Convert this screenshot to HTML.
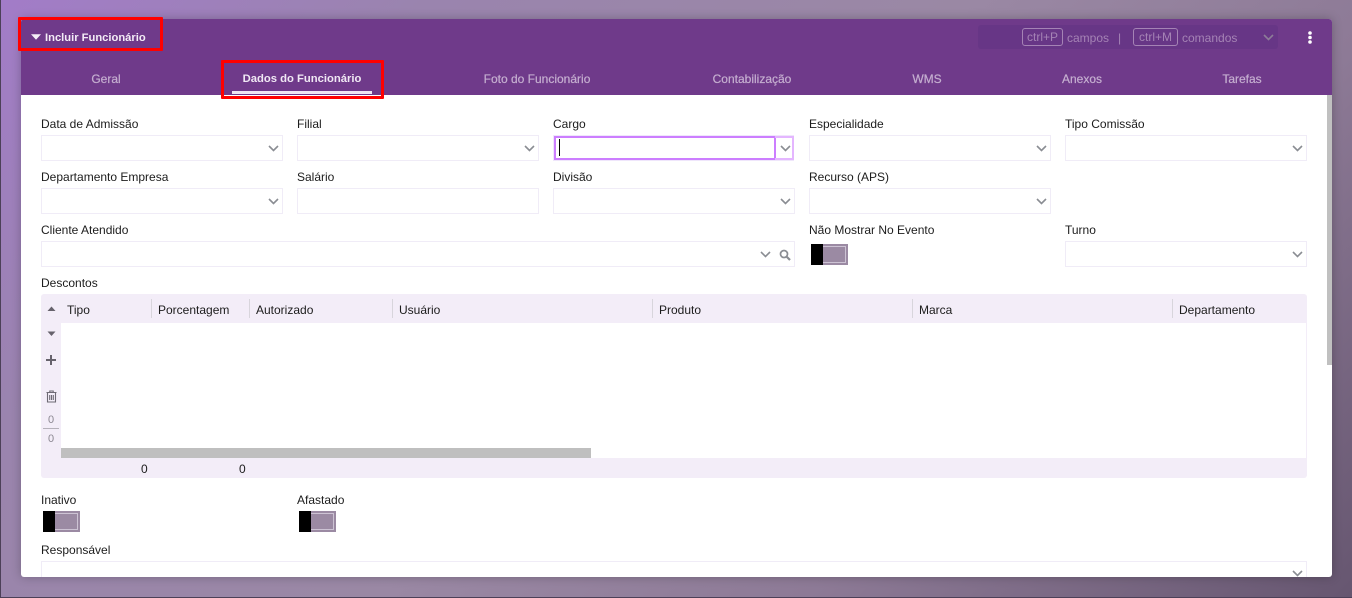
<!DOCTYPE html>
<html lang="pt-BR">
<head>
<meta charset="utf-8">
<title>Incluir Funcionário</title>
<style>
html,body{margin:0;padding:0;width:1352px;height:598px;overflow:hidden}
body{position:relative;font-family:"Liberation Sans",sans-serif;font-size:12px;color:#1c1c1c;
background:linear-gradient(135deg,#a27cc8 0%,#9a84ae 22%,#9a88a4 50%,#8d7a96 72%,#665670 100%)}
.a{position:absolute}
#edgeL{left:0;top:0;width:1px;height:598px;background:#4c4058}
#edgeB{left:0;top:597px;width:1352px;height:1px;background:#4c4058}
#panel{left:21px;top:19px;width:1311px;height:558px;background:#fff;border-radius:3px;box-shadow:0 0 10px rgba(0,0,0,.25);overflow:hidden}
#head{left:21px;top:19px;width:1311px;height:76px;background:#6f3a8a;border-radius:3px 3px 0 0}
.t{position:absolute;white-space:nowrap;line-height:16px}
.tab{color:#c5aed0;font-weight:400;top:71px;transform:translateX(-50%);-webkit-text-stroke:.2px #c5aed0}
.box{position:absolute;height:24px;width:240px;border:1px solid #f0ecf7;background:#fff}
.chev{position:absolute;width:11px;height:7px}
.sw{position:absolute;width:37px;height:21px;background:#9b8aa3}
.sw:before{content:"";position:absolute;left:12px;top:2px;width:22px;height:15px;border:1px solid #cdc3d4;border-left:0}
.sw:after{content:"";position:absolute;left:0;top:0;width:12px;height:21px;background:#000}
.sep{position:absolute;top:299px;width:1px;height:19px;background:#d8d5dc}
.red{position:absolute;border:3px solid #f00;box-sizing:border-box;border-radius:1px}
.kbd{position:absolute;top:28px;height:18px;border:1px solid #a583b5;border-radius:3px;color:#a583b5;font-size:12px;line-height:17px;text-align:center;box-sizing:border-box}
.dim{color:#a583b5;font-size:12px}
</style>
</head>
<body>
<div class="a" id="edgeL"></div>
<div class="a" id="edgeB"></div>
<div class="a" id="panel"></div>
<div class="a" id="head"></div>

<!-- header -->
<svg class="a" style="left:31px;top:34px" width="10" height="6"><path d="M0 0.3H10L5 5.7Z" fill="#f5eef8"/></svg>
<div class="t" style="left:45px;top:30px;color:#f3ecf6;font-weight:700;font-size:11.2px">Incluir Funcionário</div>

<div class="a" style="left:978px;top:25px;width:300px;height:24px;background:#673686;border-radius:3px"></div>
<div class="kbd" style="left:1022px;width:41px">ctrl+P</div>
<div class="t dim" style="left:1067px;top:30px">campos</div>
<div class="t dim" style="left:1118px;top:30px">|</div>
<div class="kbd" style="left:1133px;width:45px">ctrl+M</div>
<div class="t dim" style="left:1182px;top:30px">comandos</div>
<svg class="chev" style="left:1263px;top:34px"><path d="M1 1L5.5 5.5L10 1" fill="none" stroke="#8d7d98" stroke-width="1.6"/></svg>
<svg class="a" style="left:1307px;top:31px" width="6" height="14"><circle cx="3" cy="2" r="1.8" fill="#fff"/><circle cx="3" cy="6.5" r="1.8" fill="#fff"/><circle cx="3" cy="11" r="1.8" fill="#fff"/></svg>

<!-- tabs -->
<div class="t tab" style="left:106px">Geral</div>
<div class="t tab" style="left:302px;color:#f0e8f4;font-weight:700;font-size:11.25px;-webkit-text-stroke:0">Dados do Funcionário</div>
<div class="a" style="left:232px;top:91px;width:140px;height:3px;background:#efe6f3"></div>
<div class="t tab" style="left:537px">Foto do Funcionário</div>
<div class="t tab" style="left:752px">Contabilização</div>
<div class="t tab" style="left:927px">WMS</div>
<div class="t tab" style="left:1082px">Anexos</div>
<div class="t tab" style="left:1242px">Tarefas</div>

<!-- scrollbar -->
<div class="a" style="left:1327px;top:95px;width:5px;height:270px;background:#c0c0c0"></div>

<!-- row 1 -->
<div class="t" style="left:41px;top:116px">Data de Admissão</div>
<div class="box" style="left:41px;top:135px"></div>
<div class="t" style="left:297px;top:116px">Filial</div>
<div class="box" style="left:297px;top:135px"></div>
<div class="t" style="left:553px;top:116px">Cargo</div>
<div class="a" style="left:553px;top:135px;width:241px;height:26px;box-sizing:border-box;border:1px solid #efe6fb;background:#fff"></div>
<div class="a" style="left:554px;top:136px;width:222px;height:24px;box-sizing:border-box;border:2px solid #cc7eff"></div>
<div class="a" style="left:775px;top:136px;width:19px;height:24px;box-sizing:border-box;border:2px solid #e4b6ff;border-left:0"></div>
<div class="a" style="left:559px;top:139px;width:1px;height:17px;background:#000"></div>
<div class="t" style="left:809px;top:116px">Especialidade</div>
<div class="box" style="left:809px;top:135px"></div>
<div class="t" style="left:1065px;top:116px">Tipo Comissão</div>
<div class="box" style="left:1065px;top:135px"></div>

<!-- row 2 -->
<div class="t" style="left:41px;top:169px">Departamento Empresa</div>
<div class="box" style="left:41px;top:188px"></div>
<div class="t" style="left:297px;top:169px">Salário</div>
<div class="box" style="left:297px;top:188px"></div>
<div class="t" style="left:553px;top:169px">Divisão</div>
<div class="box" style="left:553px;top:188px"></div>
<div class="t" style="left:809px;top:169px">Recurso (APS)</div>
<div class="box" style="left:809px;top:188px"></div>

<!-- row 3 -->
<div class="t" style="left:41px;top:222px">Cliente Atendido</div>
<div class="box" style="left:41px;top:241px;width:752px"></div>
<div class="t" style="left:809px;top:222px">Não Mostrar No Evento</div>
<div class="sw" style="left:811px;top:244px"></div>
<div class="t" style="left:1065px;top:222px">Turno</div>
<div class="box" style="left:1065px;top:241px"></div>

<!-- chevrons -->
<svg class="chev" style="left:268px;top:145px"><path d="M1 1L5.5 5.5L10 1" fill="none" stroke="#8a8d93" stroke-width="1.6"/></svg>
<svg class="chev" style="left:524px;top:145px"><path d="M1 1L5.5 5.5L10 1" fill="none" stroke="#8a8d93" stroke-width="1.6"/></svg>
<svg class="chev" style="left:780px;top:145px"><path d="M1 1L5.5 5.5L10 1" fill="none" stroke="#8a8d93" stroke-width="1.6"/></svg>
<svg class="chev" style="left:1036px;top:145px"><path d="M1 1L5.5 5.5L10 1" fill="none" stroke="#8a8d93" stroke-width="1.6"/></svg>
<svg class="chev" style="left:1292px;top:145px"><path d="M1 1L5.5 5.5L10 1" fill="none" stroke="#8a8d93" stroke-width="1.6"/></svg>
<svg class="chev" style="left:268px;top:198px"><path d="M1 1L5.5 5.5L10 1" fill="none" stroke="#8a8d93" stroke-width="1.6"/></svg>
<svg class="chev" style="left:780px;top:198px"><path d="M1 1L5.5 5.5L10 1" fill="none" stroke="#8a8d93" stroke-width="1.6"/></svg>
<svg class="chev" style="left:1036px;top:198px"><path d="M1 1L5.5 5.5L10 1" fill="none" stroke="#8a8d93" stroke-width="1.6"/></svg>
<svg class="chev" style="left:760px;top:251px"><path d="M1 1L5.5 5.5L10 1" fill="none" stroke="#8a8d93" stroke-width="1.6"/></svg>
<svg class="chev" style="left:1292px;top:251px"><path d="M1 1L5.5 5.5L10 1" fill="none" stroke="#8a8d93" stroke-width="1.6"/></svg>
<svg class="a" style="left:779px;top:249px" width="12" height="12"><circle cx="5" cy="5" r="3.5" fill="none" stroke="#8a8d93" stroke-width="1.7"/><path d="M7.6 7.6L11 11" stroke="#8a8d93" stroke-width="2.2"/></svg>

<!-- grid -->
<div class="t" style="left:41px;top:275px">Descontos</div>
<div class="a" style="left:41px;top:294px;width:1266px;height:184px;background:#f3edf8;border-radius:3px"></div>
<div class="a" style="left:61px;top:323px;width:1245px;height:135px;background:#fff"></div>
<div class="a" style="left:61px;top:448px;width:530px;height:10px;background:#bfbfbf"></div>

<div class="sep" style="left:151px"></div>
<div class="sep" style="left:249px"></div>
<div class="sep" style="left:392px"></div>
<div class="sep" style="left:652px"></div>
<div class="sep" style="left:912px"></div>
<div class="sep" style="left:1172px"></div>

<div class="t" style="left:67px;top:302px">Tipo</div>
<div class="t" style="left:158px;top:302px">Porcentagem</div>
<div class="t" style="left:256px;top:302px">Autorizado</div>
<div class="t" style="left:399px;top:302px">Usuário</div>
<div class="t" style="left:659px;top:302px">Produto</div>
<div class="t" style="left:919px;top:302px">Marca</div>
<div class="t" style="left:1179px;top:302px">Departamento</div>

<svg class="a" style="left:47px;top:306px" width="9" height="6"><path d="M0.5 5L4.5 0.5L8.5 5Z" fill="#66626c"/></svg>
<svg class="a" style="left:47px;top:331px" width="9" height="6"><path d="M0.5 0.5L4.5 5L8.5 0.5Z" fill="#66626c"/></svg>
<svg class="a" style="left:46px;top:355px" width="11" height="11"><path d="M5 0V10M0 5H10" stroke="#66626c" stroke-width="2"/></svg>
<svg class="a" style="left:46px;top:390px" width="11" height="13"><path d="M0.5 2.5H10.5M3.8 2.5V1H7.2V2.5M1.5 3V12H9.5V3M3.7 5V10M5.5 5V10M7.3 5V10" fill="none" stroke="#6e6a74" stroke-width="1.1"/></svg>
<div class="t" style="left:48px;top:412px;font-size:11px;color:#8c8892">0</div>
<div class="a" style="left:43px;top:428px;width:16px;height:1px;background:#b5b1ba"></div>
<div class="t" style="left:48px;top:431px;font-size:11px;color:#8c8892">0</div>
<div class="t" style="left:141px;top:461px">0</div>
<div class="t" style="left:239px;top:461px">0</div>

<!-- bottom -->
<div class="t" style="left:41px;top:492px">Inativo</div>
<div class="sw" style="left:43px;top:511px"></div>
<div class="t" style="left:297px;top:492px">Afastado</div>
<div class="sw" style="left:299px;top:511px"></div>
<div class="t" style="left:41px;top:542px">Responsável</div>
<div class="a" style="left:41px;top:561px;width:1266px;height:16px;box-sizing:border-box;border:1px solid #f0ecf7;border-bottom:0;background:#fff"></div>
<svg class="chev" style="left:1292px;top:570px"><path d="M1 1L5.5 5.5L10 1" fill="none" stroke="#8a8d93" stroke-width="1.6"/></svg>

<!-- red highlight boxes -->
<div class="red" style="left:18px;top:17px;width:145px;height:34px"></div>
<div class="red" style="left:221px;top:60px;width:163px;height:39px"></div>
</body>
</html>
